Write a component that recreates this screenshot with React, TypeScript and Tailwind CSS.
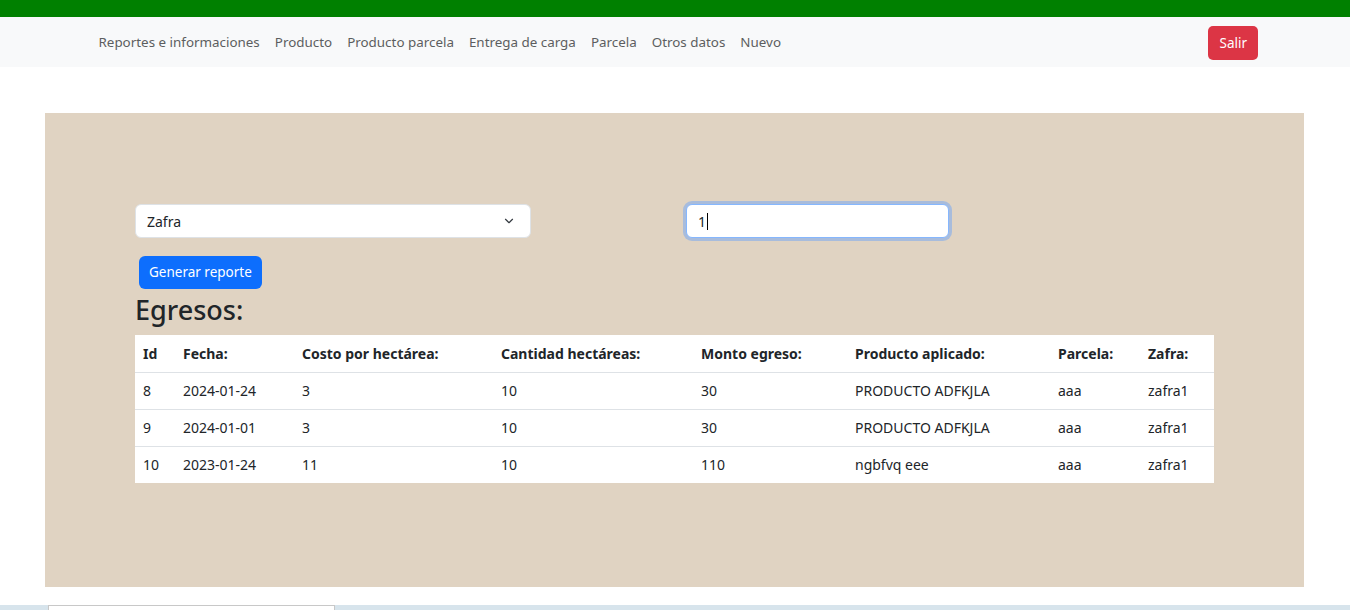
import { ChevronDown } from "lucide-react";

const links = [
  "Reportes e informaciones",
  "Producto",
  "Producto parcela",
  "Entrega de carga",
  "Parcela",
  "Otros datos",
  "Nuevo",
];

const columns = [
  { label: "Id", w: "w-[40px]" },
  { label: "Fecha:", w: "w-[119px]" },
  { label: "Costo por hectárea:", w: "w-[199px]" },
  { label: "Cantidad hectáreas:", w: "w-[200px]" },
  { label: "Monto egreso:", w: "w-[154px]" },
  { label: "Producto aplicado:", w: "w-[203px]" },
  { label: "Parcela:", w: "w-[90px]" },
  { label: "Zafra:", w: "w-[74px]" },
];

const rows = [
  ["8", "2024-01-24", "3", "10", "30", "PRODUCTO ADFKJLA", "aaa", "zafra1"],
  ["9", "2024-01-01", "3", "10", "30", "PRODUCTO ADFKJLA", "aaa", "zafra1"],
  ["10", "2023-01-24", "11", "10", "110", "ngbfvq eee", "aaa", "zafra1"],
];

const Navbar = () => (
  <div className="h-[50px] bg-[#f8f9fa] flex items-center pl-[91px] pr-[92px]">
    <nav className="flex items-center flex-1 mt-px">
      {links.map((l) => (
        <a key={l} className="px-[7.5px] text-[13.4px] text-[#5c5e60] cursor-pointer">
          {l}
        </a>
      ))}
    </nav>
    <button className="mt-[2px] h-[34px] px-[11px] rounded-[5px] bg-[#dc3545] text-white text-[13.5px]">
      Salir
    </button>
  </div>
);

const App = () => {
  return (
    <div className="w-[1350px] h-[610px] flex flex-col bg-white font-['Noto_Sans',sans-serif] text-[#212529] overflow-hidden">
      <div className="h-[17px] bg-[#008000]" />
      <Navbar />
      <main className="flex-1 pt-[46px] pl-[45px] pr-[46px]">
        <section className="h-[474px] bg-[#e0d3c2] pt-[91px] px-[90px]">
          <div className="flex items-center gap-[155px]">
            <div className="w-[396px] h-[34px] bg-white rounded-[6px] border border-[#dee2e6] flex items-center justify-between pl-[11px] pr-[14px] text-[14px]">
              <span>Zafra</span>
              <ChevronDown size={14} strokeWidth={2} className="text-[#343a40]" />
            </div>
            <div className="w-[263px] h-[34px] bg-white rounded-[6px] border border-[#86b7fe] ring-[3px] ring-[#a8bcdc] flex items-center pl-[11px] text-[14px]">
              <span>1</span>
              <span className="w-px h-[17px] bg-black ml-px" />
            </div>
          </div>
          <button className="mt-[18px] ml-[4px] h-[33px] px-[10px] rounded-[6px] bg-[#0d6efd] text-white text-[13.5px]">
            Generar reporte
          </button>
          <h3 className="text-[27px] leading-[38px] font-medium mt-[2px] mb-[6px]">Egresos:</h3>
          <table className="w-[1079px] bg-white text-[14px] table-fixed border-collapse">
            <thead>
              <tr className="h-[37px] border-b border-[#dee2e6]">
                {columns.map((c) => (
                  <th key={c.label} className={`${c.w} px-[8px] text-left font-bold`}>
                    {c.label}
                  </th>
                ))}
              </tr>
            </thead>
            <tbody>
              {rows.map((r, i) => (
                <tr key={i} className={`h-[37px] ${i < rows.length - 1 ? "border-b border-[#dee2e6]" : ""}`}>
                  {r.map((v, j) => (
                    <td key={j} className="px-[8px] text-left">
                      {v}
                    </td>
                  ))}
                </tr>
              ))}
            </tbody>
          </table>
        </section>
      </main>
      <div className="h-[5px] bg-[#d7e4ec] flex">
        <div className="ml-[48px] w-[287px] bg-white border-t border-x border-[#c8c8c8]" />
      </div>
    </div>
  );
};

export default App;
